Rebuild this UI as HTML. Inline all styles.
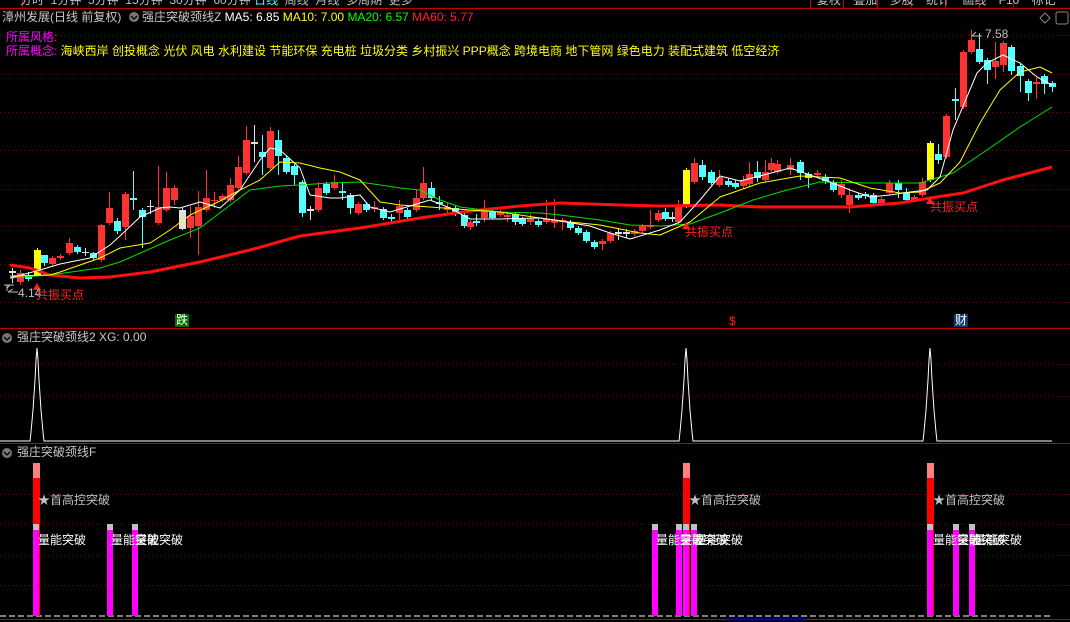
<!DOCTYPE html>
<html><head><meta charset="utf-8">
<style>
html,body{margin:0;padding:0;background:#000;width:1070px;height:622px;overflow:hidden;font-family:"Liberation Sans","Noto Sans CJK SC",sans-serif;}
.t{position:absolute;font-size:12px;white-space:nowrap;line-height:14px;}
svg{position:absolute;left:0;top:0;}
</style></head><body>
<svg id="s" width="1070" height="622" viewBox="0 0 1070 622" xmlns="http://www.w3.org/2000/svg">
<g stroke="#8b0000" stroke-width="1" stroke-dasharray="1,3">
<line x1="0" y1="35.5" x2="1070" y2="35.5"/><line x1="0" y1="74.5" x2="1070" y2="74.5"/><line x1="0" y1="112.5" x2="1070" y2="112.5"/><line x1="0" y1="150.5" x2="1070" y2="150.5"/><line x1="0" y1="189.5" x2="1070" y2="189.5"/><line x1="0" y1="226.5" x2="1070" y2="226.5"/><line x1="0" y1="264.5" x2="1070" y2="264.5"/><line x1="0" y1="302.5" x2="1070" y2="302.5"/>
<line x1="0" y1="396.5" x2="1070" y2="396.5"/><line x1="0" y1="364.5" x2="1070" y2="364.5"/>
<line x1="0" y1="494.5" x2="1070" y2="494.5"/><line x1="0" y1="524.5" x2="1070" y2="524.5"/><line x1="0" y1="555.5" x2="1070" y2="555.5"/><line x1="0" y1="585.5" x2="1070" y2="585.5"/>
</g>
<g stroke="#c00000" stroke-width="1">
<line x1="0" y1="8.5" x2="1070" y2="8.5"/><line x1="0" y1="328.5" x2="1070" y2="328.5"/><line x1="0" y1="443.5" x2="1070" y2="443.5"/><line x1="0" y1="619.5" x2="1070" y2="619.5"/>
<line x1="22.5" y1="0" x2="22.5" y2="8"/>
<line x1="810.5" y1="0" x2="810.5" y2="8"/><line x1="843.5" y1="0" x2="843.5" y2="8"/><line x1="877.5" y1="0" x2="877.5" y2="8"/><line x1="911.5" y1="0" x2="911.5" y2="8"/><line x1="945.5" y1="0" x2="945.5" y2="8"/><line x1="979.5" y1="0" x2="979.5" y2="8"/><line x1="1013.5" y1="0" x2="1013.5" y2="8"/>
</g>
<line x1="727" y1="619.5" x2="805" y2="619.5" stroke="#0000c0" stroke-width="2"/>
<g id="cd"></g>
<g fill="none" stroke-linejoin="round">
<polyline stroke="#ff1010" stroke-width="3" points="10,265 30,268 50,275 80,278 110,277 150,272 200,262 250,250 300,236 360,228 420,218 470,211 520,206 560,203 620,205 660,206 720,205 760,207 800,207 850,207 900,203 930,198 963,193 1003,180 1052,167"/>
<polyline stroke="#00e000" stroke-width="1" points="10,278 50,275 100,268 120,262 170,240 200,228 250,190 280,186 300,185 330,183 360,182 400,188 420,190 440,200 460,207 500,212 540,213 560,215 600,220 630,225 660,226 690,224 720,213 753,200 787,190 820,182 870,183 920,183 953,173 987,150 1020,127 1052,107"/>
<polyline stroke="#ffff00" stroke-width="1" points="10,276 50,275 60,272 100,258 120,248 150,243 170,230 190,215 220,201 240,190 260,180 280,162 300,163 320,168 340,172 360,180 380,202 400,205 430,207 470,210 500,212 540,218 570,222 600,225 640,233 660,235 690,222 720,197 760,183 800,176 840,178 870,188 900,193 920,192 940,183 960,162 980,123 1000,90 1020,72 1040,67 1052,73"/>
<polyline stroke="#ffffff" stroke-width="1" points="10,278 40,270 60,264 90,258 110,245 120,236 140,217 160,208 170,207 180,208 200,202 220,208 240,190 260,160 270,148 280,150 300,168 310,195 330,198 340,198 360,195 370,207 390,212 410,206 430,200 450,208 470,219 500,219 540,218 560,221 590,226 610,233 630,239 660,230 680,222 700,200 720,176 740,181 760,176 790,168 810,175 830,182 850,190 870,197 890,195 910,192 927,190 940,177 953,130 977,73 987,63 1003,55 1020,63 1037,77 1052,85"/>
</g>
<g fill="#ff2020"><polygon points="37,283 33,290 41,290"/><polygon points="686,222 682,229 690,229"/><polygon points="930,197 926,204 934,204"/></g>
<g stroke="#c0c0c0" fill="none"><path d="M4,285 h10 M7,285 v6 M7,288 l3,-3"/><path d="M8,292 l5,-3 M8,292 h10"/><path d="M972,36 l4,-4 M972,36 h10"/></g>
<rect x="175" y="314" width="14" height="13" fill="#007000"/>
<rect x="954" y="314" width="14" height="13" fill="#103a70"/>
<polyline fill="none" stroke="#fff" stroke-width="1" points="0,441 30,441 31,432 33,410 35,380 36,360 37,348 38,360 39,380 41,410 43,432 44,441 679,441 680,432 682,410 684,380 685,360 686,348 687,360 688,380 690,410 692,432 693,441 923,441 924,432 926,410 928,380 929,360 930,348 931,360 932,380 934,410 936,432 937,441 1052,441"/>
<line x1="0" y1="616" x2="1052" y2="616" stroke="#fff" stroke-dasharray="6,3"/>
<g id="bars"></g>
<path d="M1040,18 l5,-5 l5,5 l-5,5z" fill="none" stroke="#888"/>
<rect x="1056" y="12" width="12" height="12" rx="2" fill="none" stroke="#888"/>
<circle cx="134" cy="17" r="5" fill="#777"/><path d="M131,16 l3,3 l3,-3" stroke="#000" fill="none" stroke-width="1.3"/>
<circle cx="7" cy="338" r="5" fill="#777"/><path d="M4,337 l3,3 l3,-3" stroke="#000" fill="none" stroke-width="1.3"/>
<circle cx="7" cy="453" r="5" fill="#777"/><path d="M4,452 l3,3 l3,-3" stroke="#000" fill="none" stroke-width="1.3"/>
</svg>
<div class="t" style="left:20px;top:-7px;color:#c0c0c0">分时 &nbsp;1分钟 &nbsp;5分钟 &nbsp;15分钟 &nbsp;30分钟 &nbsp;60分钟 <span style="color:#5ff">日线</span> &nbsp;周线 &nbsp;月线 &nbsp;多周期 &nbsp;更多</div>
<div class="t" style="left:817px;top:-7px;color:#c0c0c0;word-spacing:9px">复权 叠加 多股 统计 画线 F10 标记</div>
<div class="t" style="left:2px;top:10px;color:#c8c8c8">漳州发展(日线 前复权)</div>
<div class="t" style="left:142px;top:10px;color:#c8c8c8">强庄突破颈线Z <span style="color:#fff">MA5: 6.85</span> <span style="color:#ff0">MA10: 7.00</span> <span style="color:#0f0">MA20: 6.57</span> <span style="color:#f22">MA60: 5.77</span></div>
<div class="t" style="left:6px;top:30px;color:#f0f">所属风格:</div>
<div class="t" style="left:6px;top:44px;color:#f0f">所属概念: <span style="color:#ff0">海峡西岸 创投概念 光伏 风电 水利建设 节能环保 充电桩 垃圾分类 乡村振兴 PPP概念 跨境电商 地下管网 绿色电力 装配式建筑 低空经济</span></div>
<div class="t" style="left:985px;top:27px;color:#c0c0c0">7.58</div>
<div class="t" style="left:18px;top:286px;color:#c0c0c0">4.14</div>
<div class="t" style="left:36px;top:288px;color:#ff2020">共振买点</div>
<div class="t" style="left:685px;top:225px;color:#ff2020">共振买点</div>
<div class="t" style="left:930px;top:200px;color:#ff2020">共振买点</div>
<div class="t" style="left:176px;top:313px;color:#fff">跌</div>
<div class="t" style="left:729px;top:314px;color:#ff2020">$</div>
<div class="t" style="left:955px;top:313px;color:#fff">财</div>
<div class="t" style="left:17px;top:330px;color:#c8c8c8">强庄突破颈线2 XG: 0.00</div>
<div class="t" style="left:17px;top:445px;color:#c8c8c8">强庄突破颈线F</div>
<div class="t" style="left:38px;top:493px;color:#c0c0c0">★首高控突破</div>
<div class="t" style="left:689px;top:493px;color:#c0c0c0">★首高控突破</div>
<div class="t" style="left:933px;top:493px;color:#c0c0c0">★首高控突破</div>
<div class="t" style="left:38px;top:533px;color:#fff">量能突破</div>
<div class="t" style="left:111px;top:533px;color:#fff">量能突破</div>
<div class="t" style="left:135px;top:533px;color:#fff">量能突破</div>
<div class="t" style="left:656px;top:533px;color:#fff">量能突破</div>
<div class="t" style="left:680px;top:533px;color:#fff">量能突破</div>
<div class="t" style="left:695px;top:533px;color:#fff">量能突破</div>
<div class="t" style="left:933px;top:533px;color:#fff">量能突破</div>
<div class="t" style="left:957px;top:533px;color:#fff">量能突破</div>
<div class="t" style="left:974px;top:533px;color:#fff">量能突破</div>
<script>
var C=[[12,271,273,268,283,'w'],[20,273,282,270,285,'r'],[28,276,279,272,281,'c'],[37,250,276,248,276,'y'],[44,255,263,255,266,'c'],[52,258,264,256,266,'r'],[60,256,258,254,260,'r'],[69,243,253,238,255,'r'],[77,247,252,245,254,'c'],[85,252,253,248,256,'w'],[93,253,258,252,260,'c'],[101,225,260,224,262,'r'],[109,208,223,192,225,'r'],[117,221,231,218,234,'c'],[125,194,227,192,240,'r'],[133,198,200,171,210,'c'],[142,210,217,208,248,'c'],[150,206,207,200,214,'w'],[158,207,223,166,225,'r'],[166,188,210,172,212,'r'],[174,188,200,185,205,'r'],[182,210,229,208,230,'w'],[190,216,228,206,238,'r'],[198,207,226,191,255,'r'],[206,198,210,170,212,'r'],[214,200,201,192,208,'r'],[222,196,200,194,202,'r'],[230,185,200,178,202,'r'],[238,167,188,156,190,'r'],[246,140,173,126,175,'r'],[254,142,144,125,162,'w'],[262,152,157,135,175,'c'],[270,131,168,127,170,'r'],[278,140,156,130,175,'c'],[286,158,172,156,174,'c'],[294,166,175,164,185,'c'],[302,182,213,180,217,'c'],[310,209,211,206,220,'w'],[318,188,210,182,212,'r'],[326,184,193,182,195,'c'],[334,182,188,175,190,'r'],[342,191,193,183,200,'c'],[350,195,208,193,214,'c'],[358,204,213,202,215,'r'],[366,204,210,202,212,'c'],[374,207,209,201,212,'r'],[383,209,218,207,220,'c'],[391,217,219,214,224,'c'],[399,206,213,200,220,'r'],[407,210,217,208,219,'c'],[416,198,210,190,212,'r'],[423,183,198,167,200,'r'],[431,188,198,182,200,'c'],[439,202,204,196,210,'c'],[447,207,210,203,214,'r'],[455,208,212,206,216,'c'],[464,215,226,213,228,'c'],[470,222,227,220,230,'r'],[476,221,223,214,226,'c'],[484,210,218,200,222,'r'],[492,212,218,210,219,'c'],[500,212,215,210,217,'r'],[507,215,217,212,222,'r'],[515,214,222,212,225,'c'],[522,219,224,217,226,'c'],[530,219,222,214,225,'r'],[538,221,225,219,227,'c'],[546,219,222,200,224,'r'],[554,220,223,199,228,'r'],[562,220,222,218,230,'r'],[570,222,228,220,230,'c'],[578,228,233,226,235,'c'],[586,232,241,230,243,'c'],[594,242,247,240,249,'c'],[602,241,244,239,250,'r'],[610,233,241,231,243,'r'],[618,232,234,228,240,'w'],[626,232,234,229,238,'w'],[634,231,234,229,236,'r'],[642,226,231,224,233,'r'],[650,225,227,210,229,'r'],[658,213,220,210,222,'r'],[665,212,219,208,221,'c'],[672,217,219,212,222,'w'],[678,205,222,200,224,'r'],[686,170,207,168,208,'y'],[694,163,182,158,184,'r'],[702,165,177,160,180,'c'],[711,172,183,170,185,'c'],[719,177,185,170,187,'r'],[728,181,185,178,187,'c'],[735,183,187,180,189,'c'],[743,180,186,176,188,'r'],[749,174,184,162,186,'r'],[757,172,178,161,182,'c'],[765,172,180,160,182,'r'],[771,163,170,158,172,'r'],[777,164,172,160,174,'r'],[790,165,170,158,175,'r'],[800,162,173,160,180,'c'],[808,174,178,172,188,'c'],[817,173,175,170,178,'r'],[825,177,181,174,184,'c'],[833,182,190,180,192,'c'],[841,184,195,180,198,'r'],[849,195,205,188,213,'r'],[858,195,198,193,200,'c'],[865,194,196,192,199,'c'],[873,195,203,193,205,'c'],[881,199,204,197,206,'r'],[889,183,193,180,195,'r'],[898,183,190,180,198,'c'],[906,193,200,188,202,'c'],[914,197,200,195,202,'r'],[922,182,195,178,197,'r'],[930,143,180,141,182,'y'],[938,154,160,144,164,'c'],[946,116,157,114,159,'r'],[955,99,101,88,120,'c'],[963,52,107,50,109,'r'],[971,40,52,30,54,'r'],[979,49,62,33,64,'c'],[987,60,70,58,84,'c'],[995,61,67,42,79,'r'],[1003,43,65,41,72,'r'],[1011,47,71,45,75,'c'],[1020,66,76,64,92,'c'],[1028,81,93,79,101,'c'],[1036,82,84,78,99,'r'],[1044,76,84,74,94,'c'],[1052,83,87,81,92,'c']];
var col={r:'#ff3232',c:'#54ffff',w:'#e0e0e0',y:'#ffff00'};
var h='';
C.forEach(function(a){var x=a[0],c=col[a[5]];h+='<line x1="'+(x+.5)+'" y1="'+a[3]+'" x2="'+(x+.5)+'" y2="'+a[4]+'" stroke="'+c+'"/>';var hh=Math.max(1,a[2]-a[1]);h+='<rect x="'+(x-3)+'" y="'+a[1]+'" width="7" height="'+hh+'" fill="'+c+'"/>';});
document.getElementById('cd').innerHTML=h;
var B=[[33,1],[107,0],[132,0],[652,0],[676,0],[683,1],[691,0],[927,1],[953,0],[969,0]];
var b='';
B.forEach(function(a){var x=a[0];if(a[1]){b+='<rect x="'+x+'" y="463" width="7" height="15" fill="#ff8080"/><rect x="'+x+'" y="478" width="7" height="138" fill="#ff0000"/>';}
b+='<rect x="'+x+'" y="524" width="6" height="6" fill="#c0c0c0"/><rect x="'+x+'" y="530" width="6" height="86" fill="#ff00ff"/>';});
document.getElementById('bars').innerHTML=b;
</script>
</body></html>
